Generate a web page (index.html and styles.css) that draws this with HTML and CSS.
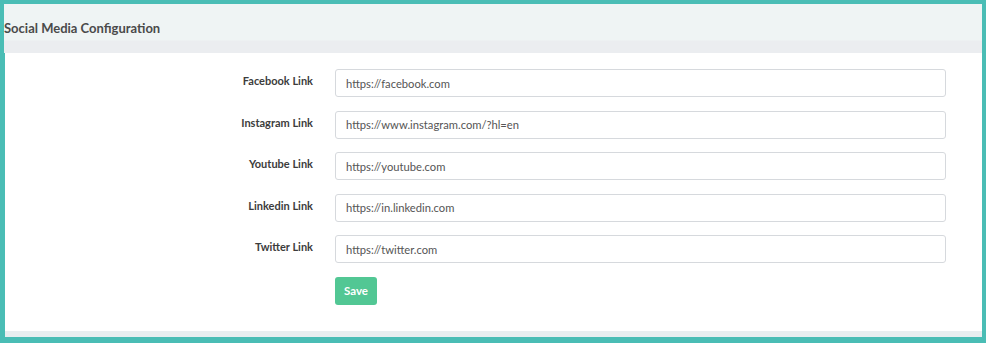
FILE: index.html
```html
<!DOCTYPE html>
<html lang="en">
<head>
  <meta charset="UTF-8">
  <title>Social Media Configuration</title>
  <link rel="stylesheet" href="styles.css">
</head>
<body>
  <div class="panel">
    <div class="panel-head">Social Media Configuration</div>
    <form class="panel-body">
      <label for="fb">Facebook Link</label>
      <input type="text" id="fb" value="https://facebook.com">
      <label for="ig">Instagram Link</label>
      <input type="text" id="ig" value="https://www.instagram.com/?hl=en">
      <label for="yt">Youtube Link</label>
      <input type="text" id="yt" value="https://youtube.com">
      <label for="li">Linkedin Link</label>
      <input type="text" id="li" value="https://in.linkedin.com">
      <label for="tw">Twitter Link</label>
      <input type="text" id="tw" value="https://twitter.com">
      <div></div>
      <div><button type="button" class="save-btn">Save</button></div>
    </form>
    <div class="panel-foot"></div>
  </div>
</body>
</html>
```

FILE: styles.css
```css
* { box-sizing: border-box; margin:0; padding:0; }
html, body { height:100%; }
body { font-family:'Lato','Open Sans',sans-serif; background:#fff; }
.panel { height:343px; border:4px solid #4abdb5; border-left-width:5px; border-bottom-width:6px; display:flex; flex-direction:column; background:#fff; }
.panel-head { height:49px; padding:16px 0 0 0; font-size:13px; font-weight:bold; color:#4a4a4a;
  background:linear-gradient(to bottom,#eff4f4 0,#eff4f4 36px,#ebedf0 37px,#ebedf0 100%); margin-left:-1px; }
.panel-body { flex:1; display:grid; grid-template-columns:308px 611px; column-gap:22px; row-gap:13.5px; padding-top:16px; align-content:start; }
label { text-align:right; font-size:11px; font-weight:bold; color:#3c3c3c; padding-top:5px; }
input { height:28px; border:1px solid #d6d9dd; border-radius:3px; padding:0 10px; font-family:inherit; font-size:11.2px; color:#555; background:#fff; }
.save-btn { height:28px; width:42px; border:none; border-radius:3px; background:#52c794; color:#fff; font-family:inherit; font-size:11.5px; font-weight:bold; }
.panel-foot { height:6px; background:#e8eef0; }
```
